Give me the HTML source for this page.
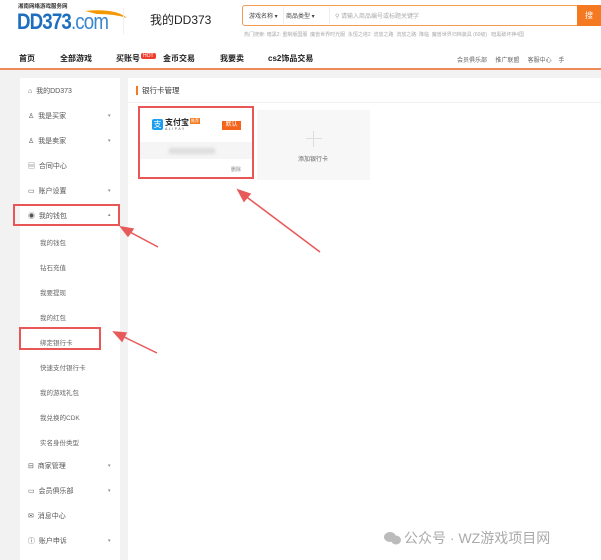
<!DOCTYPE html><html><head><meta charset="utf-8"><style>
*{margin:0;padding:0;box-sizing:border-box}
body{width:601px;height:560px;overflow:hidden;background:#f2f2f2;font-family:"Liberation Sans","Noto Sans CJK SC",sans-serif;position:relative;color:#333}
.a{position:absolute;white-space:nowrap}
.s{font-size:7px;color:#555}
.sub{font-size:6.5px;color:#666}
.ar{font-size:5px;color:#888}
</style></head><body>
<div class="a" style="left:0;top:0;width:601px;height:68px;background:#fff"></div>
<div class="a" style="left:0;top:68px;width:601px;height:2px;background:#f08a5a"></div>
<div class="a" style="left:18px;top:5px;font-size:5.5px;line-height:1;color:#333;font-weight:bold">湘南网络游戏服务网</div>
<div class="a" style="left:17px;top:11px;font-size:22px;line-height:1;font-weight:bold;color:#1e6fc0;letter-spacing:-1px;transform:scaleX(.85);transform-origin:left">DD373<span style="font-weight:normal;color:#3a86d0">.com</span></div>
<svg class="a" style="left:85px;top:8px" width="45" height="22"><path d="M0 3 Q30 0 42 10 Q30 6 12 6" fill="#f39800"/></svg>
<div class="a" style="left:123px;top:8px;width:1px;height:26px;background:#eee"></div>
<div class="a" style="left:150px;top:11px;font-size:12px;color:#222">我的DD373</div>
<div class="a" style="left:242px;top:5px;width:370px;height:21px;border:1.5px solid #f39a50;border-radius:3px"></div>
<div class="a" style="left:249px;top:11px;font-size:6px;color:#444">游戏名称 ▾ &nbsp;&nbsp;&nbsp;&nbsp;商品类型 ▾</div>
<div class="a" style="left:283px;top:7px;width:1px;height:17px;background:#eee"></div>
<div class="a" style="left:329px;top:7px;width:1px;height:17px;background:#eee"></div>
<div class="a" style="left:335px;top:11px;font-size:6px;color:#aaa">⚲ 请输入商品编号或标题关键字</div>
<div class="a" style="left:577px;top:5px;width:30px;height:21px;background:#f47920;color:#fff;font-size:8px;padding:5px 0 0 8px">搜</div>
<div class="a" style="left:244px;top:31px;font-size:5px;color:#aaa">热门搜索: 暗黑2: 重制版国服 &nbsp;魔兽世界时光服 &nbsp;永恒之塔2 &nbsp;流放之路 &nbsp;流放之路: 降临 &nbsp;魔兽世界归档装具 (60级) &nbsp;&nbsp;暗黑破坏神4国</div>
<div class="a" style="left:19px;top:53px;font-size:8px;font-weight:bold;color:#222">首页</div>
<div class="a" style="left:60px;top:53px;font-size:8px;font-weight:bold;color:#222">全部游戏</div>
<div class="a" style="left:116px;top:53px;font-size:8px;font-weight:bold;color:#222">买账号</div>
<div class="a" style="left:141px;top:53px;font-size:5px;background:#f03c2c;color:#fff;padding:0 2px;border-radius:2px">HOT</div>
<div class="a" style="left:163px;top:53px;font-size:8px;font-weight:bold;color:#222">金币交易</div>
<div class="a" style="left:220px;top:53px;font-size:8px;font-weight:bold;color:#222">我要卖</div>
<div class="a" style="left:268px;top:53px;font-size:8px;font-weight:bold;color:#222">cs2饰品交易</div>
<div class="a" style="left:457px;top:55px;font-size:6px;color:#666">会员俱乐部 &nbsp;&nbsp;&nbsp;&nbsp;推广联盟 &nbsp;&nbsp;&nbsp;&nbsp;客服中心 &nbsp;&nbsp;&nbsp;手</div>

<div class="a" style="left:20px;top:78px;width:100px;height:482px;background:#fff"></div>
<div class="a" style="left:128px;top:78px;width:473px;height:482px;background:#fff"></div>
<div class="a" style="left:136px;top:86px;width:2px;height:9px;background:#f47920"></div>
<div class="a" style="left:142px;top:85px;font-size:7.5px;color:#333">银行卡管理</div>
<div class="a" style="left:128px;top:102px;width:473px;height:1px;background:#f0f0f0"></div>

<div class="a" style="left:140px;top:108px;width:112px;height:69px;background:#fff"></div>
<div class="a" style="left:140px;top:142px;width:112px;height:17px;background:#f5f5f5"></div>
<div class="a" style="left:169px;top:148px;width:46px;height:6px;background:#ddd;filter:blur(1.5px)"></div>
<div class="a" style="left:152px;top:119px;width:11px;height:11px;background:#1a9ef0;border-radius:2px;color:#fff;font-size:8px;line-height:11px;text-align:center">支</div>
<div class="a" style="left:165px;top:117px;font-size:8px;font-weight:bold;color:#222">支付宝</div>
<div class="a" style="left:190px;top:118px;font-size:4px;background:#f47920;color:#fff;padding:0 1px">推荐</div>
<div class="a" style="left:165px;top:127px;font-size:3.5px;color:#555;letter-spacing:1.5px">ALIPAY</div>
<div class="a" style="left:222px;top:121px;width:19px;height:9px;background:#f4651b;color:#fff;font-size:6px;text-align:center;line-height:9px">默认</div>
<div class="a" style="left:231px;top:166px;font-size:5px;color:#888">删除</div>
<div class="a" style="left:138px;top:106px;width:116px;height:73px;border:2px solid #e85656"></div>

<div class="a" style="left:257px;top:110px;width:113px;height:70px;background:#f7f7f7"></div>
<div class="a" style="left:306px;top:138px;width:16px;height:1px;background:#ddd"></div>
<div class="a" style="left:313px;top:131px;width:1px;height:16px;background:#ddd"></div>
<div class="a" style="left:298px;top:154px;font-size:6px;color:#666">添加银行卡</div>

<div class="a s" style="left:28px;top:86px">⌂ &nbsp;我的DD373</div>
<div class="a s" style="left:28px;top:111px">♙ &nbsp;我是买家</div>
<div class="a s" style="left:28px;top:136px">♙ &nbsp;我是卖家</div>
<div class="a s" style="left:28px;top:161px">▤ &nbsp;合同中心</div>
<div class="a s" style="left:28px;top:186px">▭ &nbsp;账户设置</div>
<div class="a s" style="left:28px;top:211px">◉ &nbsp;我的钱包</div>
<div class="a ar" style="left:108px;top:113px">▾</div>
<div class="a ar" style="left:108px;top:138px">▾</div>
<div class="a ar" style="left:108px;top:188px">▾</div>
<div class="a ar" style="left:108px;top:212px">▴</div>
<div class="a sub" style="left:40px;top:237px">我的钱包</div>
<div class="a sub" style="left:40px;top:262px">钻石充值</div>
<div class="a sub" style="left:40px;top:287px">我要提现</div>
<div class="a sub" style="left:40px;top:312px">我的红包</div>
<div class="a sub" style="left:40px;top:337px">绑定银行卡</div>
<div class="a sub" style="left:40px;top:362px">快速支付银行卡</div>
<div class="a sub" style="left:40px;top:387px">我的游戏礼包</div>
<div class="a sub" style="left:40px;top:412px">我兑换的CDK</div>
<div class="a sub" style="left:40px;top:437px">实名身份类型</div>
<div class="a s" style="left:28px;top:461px">⊟ &nbsp;商家管理</div>
<div class="a s" style="left:28px;top:486px">▭ &nbsp;会员俱乐部</div>
<div class="a s" style="left:28px;top:511px">✉ &nbsp;消息中心</div>
<div class="a s" style="left:28px;top:536px">ⓘ &nbsp;账户申诉</div>
<div class="a ar" style="left:108px;top:463px">▾</div>
<div class="a ar" style="left:108px;top:488px">▾</div>
<div class="a ar" style="left:108px;top:538px">▾</div>

<div class="a" style="left:13px;top:204px;width:107px;height:22px;border:2px solid #e85656"></div>
<div class="a" style="left:19px;top:327px;width:82px;height:23px;border:2px solid #e85656"></div>

<svg class="a" style="left:0;top:0" width="601" height="560">
<g stroke="#e85a5a" stroke-width="1.5" fill="#e85a5a">
<line x1="158" y1="247" x2="126" y2="230"/><path d="M121 227 L133 229 L128 236 Z"/>
<line x1="320" y1="252" x2="244" y2="195"/><path d="M238 190 L250 194 L244 201 Z"/>
<line x1="157" y1="353" x2="120" y2="335"/><path d="M114 332 L126 333 L122 341 Z"/>
</g>
<ellipse cx="390" cy="537" rx="6" ry="5" fill="#bbb"/><ellipse cx="396" cy="540" rx="5" ry="4.5" fill="#bbb"/>
</svg>

<div class="a" style="left:404px;top:528px;font-size:14px;color:#aaa">公众号 · WZ游戏项目网</div>
</body></html>
